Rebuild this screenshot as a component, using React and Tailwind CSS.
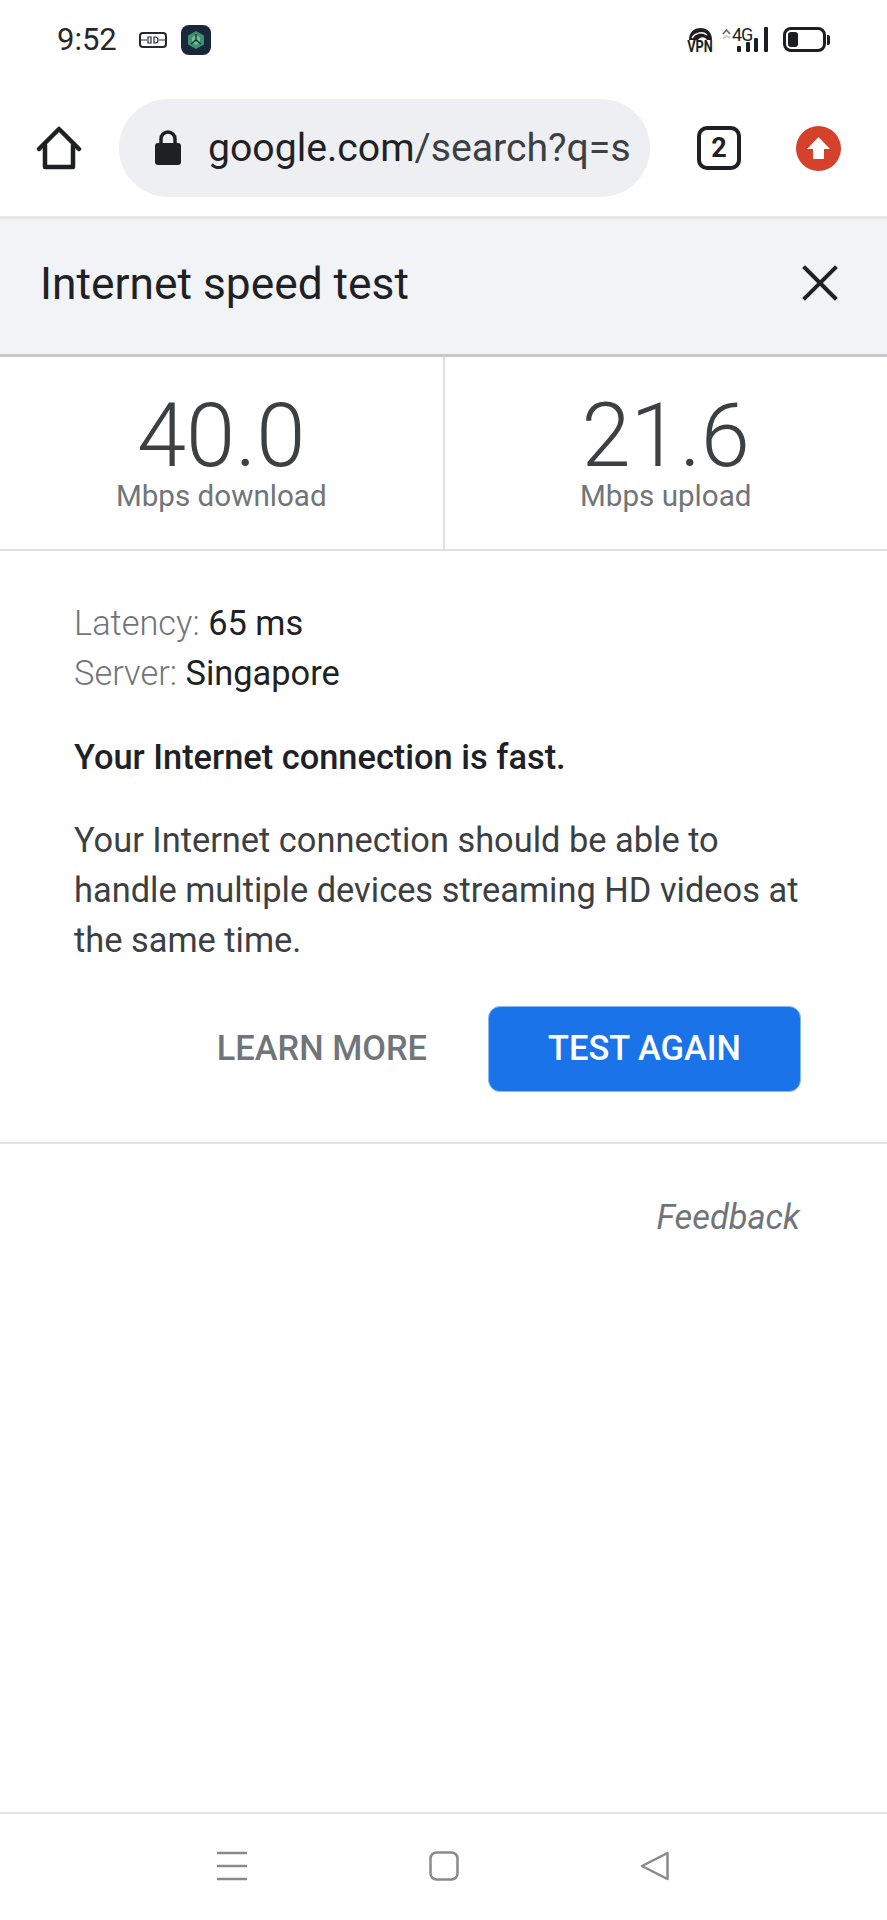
const roboto = "font-['Roboto',sans-serif]";

const StripIcon = () => (
  <svg width="28" height="18" viewBox="0 0 28 18" fill="none" stroke="#26282b" strokeWidth="1.6">
    <rect x="1" y="2" width="26" height="14" rx="3" strokeWidth="2" />
    <path d="M1 9h7M20 9h7M9 6h3v6H9zM16 6a3 3 0 0 1 0 6h-1V6z" strokeWidth="1.2" />
  </svg>
);

const AppIcon = () => (
  <svg width="30" height="30" viewBox="0 0 30 30">
    <rect width="30" height="30" rx="8" fill="#18283a" />
    <path d="M15 6l8 4.500v9L15 24l-8-4.500v-9z" fill="#3f9270" />
    <path d="M15 10l4 2.500v5L15 20l-4-2.500v-5z" fill="#6cc092" />
    <path d="M15 9v6M15 15l-5 4M15 15l5 4" stroke="#18283a" strokeWidth="1.300" />
  </svg>
);

const VpnIcon = () => (
  <div className="flex h-[26px] w-[25px] flex-col items-center">
    <svg className="shrink-0" width="25" height="13" viewBox="0 0 25 13">
      <path d="M1 13C1 5 6 1 12.500 1S24 5 24 13H1z" fill="#1d1e20" />
      <path d="M4 11c3-5 10-7 15-3" stroke="#fff" strokeWidth="1.500" fill="none" />
      <path d="M10 13c2-3 6-4 9 0z" fill="#fff" />
    </svg>
    <span className="scale-x-[0.8] text-[16px] leading-[13px] font-bold whitespace-nowrap text-[#1d1e20]">VPN</span>
  </div>
);

const SignalIcon = () => (
  <div className="relative h-[26px] w-[46px]">
    <svg className="absolute top-0 left-0" width="46" height="26" viewBox="0 0 46 26">
      <path d="M1 7l3.500-4L8 7" stroke="#6b6d70" strokeWidth="1.800" fill="none" />
      <path d="M1 11l3.500-2L8 11" stroke="#c8c9cb" strokeWidth="1.800" fill="none" />
      <rect x="15" y="19" width="4" height="6" rx="1" fill="#1d1e20" />
      <rect x="24" y="15" width="4" height="10" rx="1" fill="#1d1e20" />
      <rect x="32" y="11" width="4" height="14" rx="1" fill="#1d1e20" />
      <rect x="42" y="0" width="4" height="25" rx="1" fill="#1d1e20" />
    </svg>
    <span className="absolute top-[-1px] left-[10px] text-[18px] leading-[18px] tracking-[-1px] text-[#1d1e20]">4G</span>
  </div>
);

const BatteryIcon = () => (
  <div className="flex items-center gap-[1px]">
    <div className="flex h-[25px] w-[43px] items-center rounded-[8px] border-[3px] border-[#1d1e20] p-[2px]">
      <div className="h-full w-[10px] rounded-[3px] bg-[#1d1e20]" />
    </div>
    <div className="h-[10px] w-[3px] rounded-r-[2px] bg-[#1d1e20]" />
  </div>
);

const HomeIcon = () => (
  <svg width="46" height="46" viewBox="0 0 46 46" fill="none" stroke="#1f2023" strokeWidth="4.500" strokeLinejoin="round" strokeLinecap="round">
    <path d="M3 24L23 4l20 20" />
    <path d="M9 20v22h28V20" />
  </svg>
);

const LockIcon = () => (
  <svg width="28" height="36" viewBox="0 0 28 36">
    <path d="M7 15V9a7 7 0 0 1 14 0v6" fill="none" stroke="#1f2023" strokeWidth="3.500" />
    <rect x="1" y="13" width="26" height="22" rx="3" fill="#1f2023" />
  </svg>
);

const UpdateIcon = () => (
  <svg width="45" height="45" viewBox="0 0 45 45">
    <circle cx="22.500" cy="22.500" r="22.500" fill="#d6412c" />
    <path d="M22.500 11L34 23h-6v10H17V23h-6z" fill="#fff" />
  </svg>
);

const Stat = ({ value, label, className }) => (
  <div className={`flex flex-1 flex-col items-center pt-[36px] ${className}`}>
    <span className="text-[88.5px] leading-[86px] font-light text-[#3c4043]">{value}</span>
    <span className="mt-[-3px] text-[29.6px] leading-[40px] text-[#70757a]">{label}</span>
  </div>
);

export default function App() {
  return (
    <div className={`${roboto} flex h-[1920px] w-[887px] flex-col overflow-hidden bg-white text-[#202124]`}>
      {/* status bar */}
      <div className="flex h-[79px] items-center justify-between px-[57px]">
        <div className="flex items-center">
          <span className="text-[31px] leading-none font-normal text-[#26282b]">9:52</span>
          <span className="ml-[22px]"><StripIcon /></span>
          <span className="ml-[14px]"><AppIcon /></span>
        </div>
        <div className="flex items-center gap-[9px]">
          <VpnIcon />
          <SignalIcon />
          <span className="ml-[6px]"><BatteryIcon /></span>
        </div>
      </div>

      {/* browser toolbar */}
      <div className="flex h-[140px] items-start border-b-[3px] border-[#e6e6e8] pt-[20px]">
        <span className="mt-[26px] ml-[36px]"><HomeIcon /></span>
        <div className="ml-[37px] flex h-[98px] w-[531px] items-center overflow-hidden rounded-full bg-[#eeeff3] pl-[35px]">
          <LockIcon />
          <span className="ml-[26px] text-[39.2px] whitespace-nowrap text-[#3c4043]">
            <span className="text-[#202124]">google.com</span>/search?q=s
          </span>
        </div>
        <div className="mt-[27px] ml-[47px] flex h-[44px] w-[44px] items-center justify-center rounded-[10px] border-[4px] border-[#1f2023] text-[27px] font-bold">2</div>
        <span className="mt-[27px] ml-[55px]"><UpdateIcon /></span>
      </div>

      {/* speed test title */}
      <div className="flex h-[138px] items-center justify-between border-b-[3px] border-[#c9c9cb] bg-[#f2f3f7] pr-[49px] pb-[4px] pl-[40px]">
        <span className="text-[44.3px] text-[#202124]">Internet speed test</span>
        <svg className="mb-[3px]" width="36" height="36" viewBox="0 0 36 36" stroke="#202124" strokeWidth="4" strokeLinecap="square">
          <path d="M3 3l30 30M33 3L3 33" />
        </svg>
      </div>

      {/* results */}
      <div className="flex h-[194px] border-b-[2px] border-[#e0e0e0]">
        <Stat value="40.0" label="Mbps download" className="border-r-[2px] border-[#e0e0e0]" />
        <Stat value="21.6" label="Mbps upload" />
      </div>

      {/* details */}
      <div className="flex h-[593px] flex-col border-b-[2px] border-[#e4e4e4] pt-[47px] pr-[74px] pl-[74px] text-[34.4px] leading-[50px]">
        <div><span className="font-light text-[#70757a]">Latency:</span> 65 ms</div>
        <div><span className="font-light text-[#70757a]">Server:</span> Singapore</div>
        <div className="mt-[34px] font-medium">Your Internet connection is fast.</div>
        <div className="mt-[33px] text-[#3c4043]">
          Your Internet connection should be able to handle multiple devices streaming HD videos at the same time.
        </div>
        <div className="mt-[41px] flex items-center justify-end pr-[12px]">
          <span className="mb-[2px] font-medium text-[#70757a]">LEARN MORE</span>
          <button className="ml-[61px] h-[86px] w-[313px] rounded-[12px] border border-[#8ab8f5] bg-[#1a73e8] pb-[2px] font-medium text-white">TEST AGAIN</button>
        </div>
      </div>

      <div className="flex justify-end pt-[48px] pr-[87px] text-[34.4px] leading-[50px] text-[#70757a] italic">Feedback</div>

      {/* nav bar */}
      <div className="mt-auto flex h-[108px] items-center justify-between border-t-[2px] border-[#e4e4e4] pr-[217px] pb-[2px] pl-[216px]">
        <svg width="32" height="30" viewBox="0 0 32 30" stroke="#8a8a8a" strokeWidth="2.500">
          <path d="M1 2h30M1 15h30M1 28h30" />
        </svg>
        <svg width="30" height="30" viewBox="0 0 30 30" fill="none" stroke="#8a8a8a" strokeWidth="2.500">
          <rect x="1.500" y="1.500" width="27" height="27" rx="6" />
        </svg>
        <svg width="30" height="30" viewBox="0 0 30 30" fill="none" stroke="#8a8a8a" strokeWidth="2.500" strokeLinejoin="round">
          <path d="M27.500 2L2 15l25.500 13z" />
        </svg>
      </div>
    </div>
  );
}
